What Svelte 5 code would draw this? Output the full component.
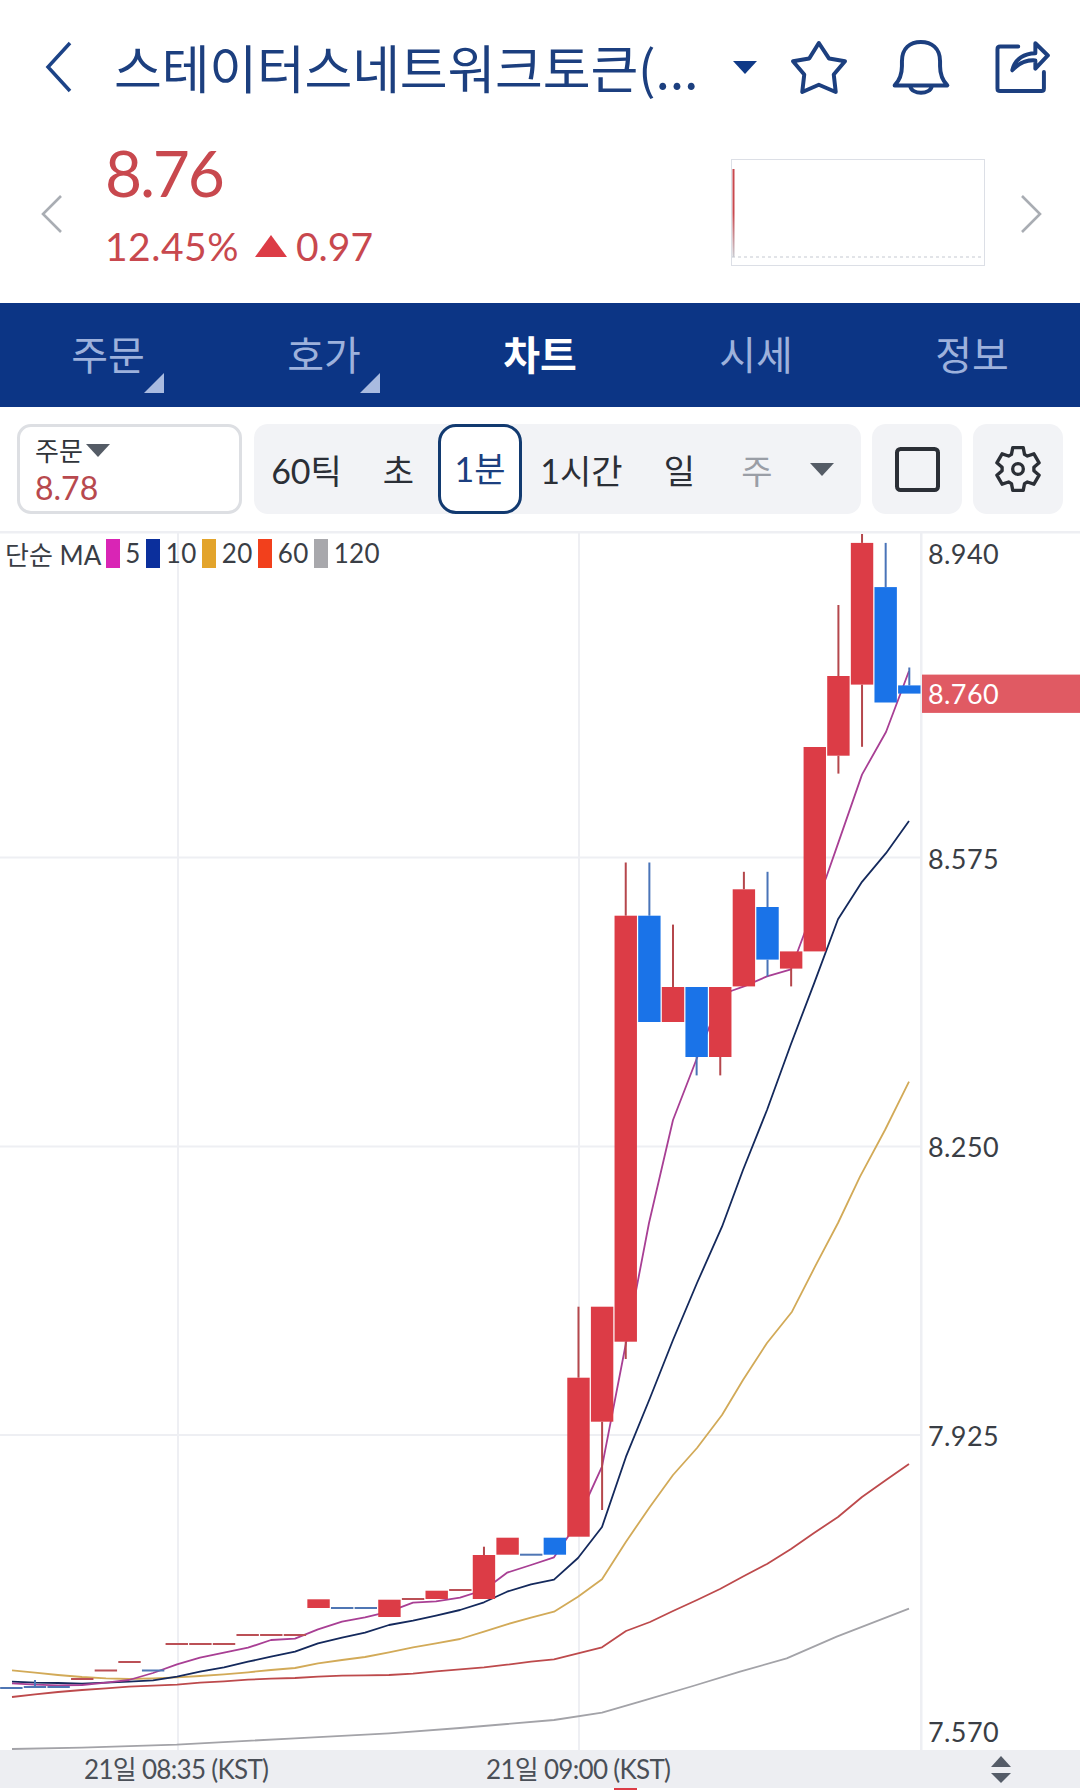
<script>
  const tabs = [
    { label: '주문', corner: true },
    { label: '호가', corner: true },
    { label: '차트', active: true },
    { label: '시세' },
    { label: '정보' }
  ];

  const xAt = (k) => 909.3 - 23.63 * k;

  // k, top, bottom, wick top, wick bottom, colour
  const candles = [
    [0, 685.4, 693.6, 667.5, 0, 'b'],
    [1, 587.1, 702.5, 542.9, 0, 'b'],
    [2, 542.9, 684.6, 534, 746.8, 'r'],
    [3, 676, 755.7, 605, 773.6, 'r'],
    [4, 747, 951.4, 0, 0, 'r'],
    [5, 951.4, 968.6, 0, 986.4, 'r'],
    [6, 907, 959.6, 871.8, 976.4, 'b'],
    [7, 889.3, 986.4, 871.8, 0, 'r'],
    [8, 987, 1057, 0, 1075.4, 'r'],
    [9, 987, 1057, 0, 1075.4, 'b'],
    [10, 987, 1022, 924.6, 0, 'r'],
    [11, 915.7, 1022, 862.5, 0, 'b'],
    [12, 915.7, 1341.7, 862.5, 1359, 'r'],
    [13, 1306.7, 1421.7, 0, 1510, 'r'],
    [14, 1377.7, 1536.7, 1306.7, 0, 'r'],
    [15, 1537.7, 1554.7, 0, 0, 'b'],
    [16, 1553.7, 1555.7, 0, 0, 'b'],
    [17, 1537.7, 1554.7, 0, 0, 'r'],
    [18, 1555, 1599, 1546.7, 0, 'r'],
    [19, 1589, 1591, 0, 0, 'r'],
    [20, 1590.7, 1599, 0, 0, 'r'],
    [21, 1598, 1600, 0, 0, 'r'],
    [22, 1599.7, 1617, 0, 0, 'r'],
    [23, 1607, 1609, 0, 0, 'b'],
    [24, 1607, 1609, 0, 0, 'b'],
    [25, 1599.3, 1608, 0, 0, 'r'],
    [26, 1634, 1636, 0, 0, 'r'],
    [27, 1634, 1636, 0, 0, 'r'],
    [28, 1634, 1636, 0, 0, 'r'],
    [29, 1643, 1645, 0, 0, 'r'],
    [30, 1643, 1645, 0, 0, 'r'],
    [31, 1643, 1645, 0, 0, 'r'],
    [32, 1669.5, 1671.5, 0, 0, 'b'],
    [33, 1661, 1663, 0, 0, 'r'],
    [34, 1669.5, 1671.5, 0, 0, 'r'],
    [35, 1678, 1680, 0, 0, 'r'],
    [36, 1686, 1688, 0, 0, 'b'],
    [37, 1686, 1688, 1680, 0, 'b'],
    [38, 1687, 1689, 0, 0, 'b']
  ];

  const ma = [
    {
      color: '#a3a3a8',
      pts: '12,1749 82,1747.7 176.7,1744.7 294.7,1738.3 389,1733.3 460,1728 554,1720 602,1712.7 640,1701.7 693,1686 740,1671.7 786.7,1658.3 836.7,1636.7 909,1608.7'
    },
    {
      color: '#bd4a4c',
      pts: '12,1697 35,1694.3 58,1692 82,1690 106,1688.3 129,1686.7 153,1685.7 177,1684.7 200,1682.7 224,1681.3 248,1679.7 271,1678.7 295,1678 318,1676.7 342,1675.7 365,1675.3 389,1675 413,1673.7 436,1671.3 460,1669.3 484,1667.3 507,1664.7 531,1661.7 554,1659.3 578,1653.3 602,1647.3 626,1631 650,1622 673,1611 697,1600 720,1589 744,1576 767,1564 791,1549 814,1533 838,1517 862,1497 886,1480 909,1464'
    },
    {
      color: '#d2aa58',
      pts: '12,1670.3 35,1672.7 58,1675 82,1677 106,1678.3 129,1679 153,1678.3 177,1677.3 200,1676 224,1674.3 248,1672.3 271,1670 295,1668 318,1663.3 342,1660 365,1657 389,1652.3 413,1647.3 436,1643.3 460,1639 484,1631.7 507,1624.3 531,1617.7 554,1611.7 578,1596.7 602,1579.3 626,1541.7 650,1506.7 673,1475 697,1448 722,1415 743,1380 767,1343 792,1311.7 815,1266.7 838,1223 860,1176.7 885,1130 909,1081.7'
    },
    {
      color: '#14295c',
      pts: '12,1681.7 35,1682.7 58,1683 82,1683.7 106,1682.7 129,1681.7 153,1680.3 177,1676.7 200,1671.7 224,1667.3 248,1661.7 271,1656.7 295,1651.7 318,1643.3 342,1637.7 365,1632.7 389,1625 413,1620.7 436,1615.7 460,1610 484,1602.3 507,1591.7 531,1584.3 554,1579.7 578,1558 602,1527 626,1456.7 650,1398 673,1340 697,1283 722,1226.7 743,1170 767,1110 791,1044 814,983.6 838,919.3 862,881.8 886,853.2 909,821'
    },
    {
      color: '#a83f94',
      pts: '12,1683.3 35,1684.7 58,1685.3 82,1685 106,1682.7 129,1680 153,1673 177,1664.3 200,1657.7 224,1652.7 248,1647.7 271,1640 295,1638.7 318,1629.3 342,1621.7 365,1617.3 389,1611.7 413,1602.7 436,1601.3 460,1597.7 484,1590 507,1572.7 531,1565 554,1557.3 578,1522 589,1495 602,1466.7 626,1343 649,1223 673,1120 697,1058 720,1000 731,991 744,986.4 767,976.4 791,969.3 803,937 814,908 826,878 838,843.6 862,774.6 886,732 909,671'
    }
  ];

  const hlines = [857.5, 1146.5, 1435];
  const vlines = [178, 579];
  const prices = [
    ['8.940', 553.6],
    ['8.575', 858.6],
    ['8.250', 1146.5],
    ['7.925', 1435],
    ['7.570', 1731.7]
  ];

  const legend = [
    { color: '#d925b5', text: '5' },
    { color: '#0b2f9c', text: '10' },
    { color: '#e3a42b', text: '20' },
    { color: '#f2401c', text: '60' },
    { color: '#a8a8ac', text: '120' }
  ];

  // gear outline, six teeth around (0,0)
  const gear = [];
  for (let i = 0; i < 6; i++) {
    const a = (i * Math.PI) / 3 - Math.PI / 2;
    for (const [r, d] of [[48, -0.42], [66, -0.24], [66, 0.24], [48, 0.42]]) {
      gear.push(`${(r * Math.cos(a + d)).toFixed(1)},${(r * Math.sin(a + d)).toFixed(1)}`);
    }
  }
</script>

<div class="page">
  <header class="top">
    <svg class="back" viewBox="0 0 27 52"><path d="M25 2 L3 26 L25 50" /></svg>
    <div class="title">스테이터스네트워크토큰(...</div>
    <span class="drop"></span>
    <svg class="star" viewBox="55 35 185 178">
      <polygon points="147,50 178,97 226,105 192,145 198,198 147,176 97,198 103,145 69,105 118,97" />
    </svg>
    <svg class="bell" viewBox="360 35 185 178">
      <path d="M373 178 Q395 155 395 120 V105 C395 65 420 47 452 47 S510 65 510 105 V120 Q510 155 532 178 Z" />
      <path d="M420 180 C425 207 480 207 485 180" />
    </svg>
    <svg class="share" viewBox="672 35 175 170">
      <path d="M745 58 H690 Q682 58 682 66 V185 Q682 193 690 193 H815 Q823 193 823 185 V135" />
      <path d="M727 130 C735 95 765 78 797 78 V48 L835 85 L797 125 V100 C770 98 745 110 727 130 Z" />
    </svg>
  </header>

  <section class="quote">
    <svg class="nav" viewBox="0 0 21 38"><path d="M20 1 L2 19 L20 37" /></svg>
    <div class="price">
      <div class="now">8.76</div>
      <div class="change">
        <span class="pct">12.45%</span>
        <i class="up"></i>
        <span>0.97</span>
      </div>
    </div>
    <div class="spark">
      <svg viewBox="0 0 252 105">
        <defs>
          <linearGradient id="sparkline" x1="0" y1="0" x2="0" y2="1">
            <stop offset="0" stop-color="#c8484e" />
            <stop offset="0.5" stop-color="#c8484e" />
            <stop offset="1" stop-color="#c9ccd2" />
          </linearGradient>
        </defs>
        <line class="dots" x1="0" y1="97" x2="252" y2="97" />
        <rect x="0.5" y="9" width="2" height="88" fill="url(#sparkline)" />
      </svg>
    </div>
    <svg class="nav next" viewBox="0 0 21 38"><path d="M1 1 L19 19 L1 37" /></svg>
  </section>

  <nav class="tabs">
    {#each tabs as tab}
      <div class="tab" class:active={tab.active}>
        {tab.label}
        {#if tab.corner}<span class="corner"></span>{/if}
      </div>
    {/each}
  </nav>

  <section class="toolbar">
    <div class="order">
      <div class="order-label">주문<i></i></div>
      <div class="order-price">8.78</div>
    </div>
    <div class="periods">
      <span>60틱</span>
      <span>초</span>
      <span class="on">1분</span>
      <span>1시간</span>
      <span>일</span>
      <span class="off">주</span>
      <i></i>
    </div>
    <div class="tool">
      <svg viewBox="0 0 45 45" width="45" height="45"><rect x="2" y="2" width="41" height="41" rx="3.5" /></svg>
    </div>
    <div class="tool">
      <svg viewBox="-75 -75 150 150" width="50" height="50">
        <polygon points={gear.join(' ')} />
        <circle r="16" />
      </svg>
    </div>
  </section>

  <section class="chart">
    <svg viewBox="0 531 1080 1219" width="1080" height="1219">
      <rect class="grid" x="0" y="531" width="1080" height="2.5" />
      {#each vlines as x}<rect class="grid" x={x - 1} y="533" width="2" height="1217" />{/each}
      {#each hlines as y}<rect class="grid" x="0" y={y - 1} width="921" height="2" />{/each}
      <rect class="grid" x="920" y="533" width="2.5" height="1217" />

      {#each ma as line}
        <polyline points={line.pts} fill="none" stroke={line.color} stroke-width="1.8" stroke-linejoin="round" />
      {/each}

      {#each candles as [k, top, bot, wt, wb, c]}
        {#if wt}<rect x={xAt(k) - 1} y={wt} width="2" height={top - wt} fill={c === 'r' ? '#b5474c' : '#4a74b8'} />{/if}
        {#if wb}<rect x={xAt(k) - 1} y={bot} width="2" height={wb - bot} fill={c === 'r' ? '#b5474c' : '#4a74b8'} />{/if}
        {#if bot - top < 3}
          <rect x={xAt(k) - 11.2} y={top} width="22.4" height={bot - top} fill={c === 'r' ? '#bb5056' : '#4f76b4'} />
        {:else}
          <rect x={xAt(k) - 11.2} y={top} width="22.4" height={bot - top} fill={c === 'r' ? '#dc3c46' : '#1a73e8'} />
        {/if}
      {/each}

      <rect x="922" y="674.6" width="158" height="38.3" fill="#e05a63" />
      {#each prices as [label, y]}
        <text x="928" y={y} class="axis">{label}</text>
      {/each}
      <text x="928" y="693.6" class="axis cur">8.760</text>
    </svg>

    <div class="legend">
      <span class="ma-name">단순 MA</span>
      {#each legend as item}
        <i style="background:{item.color}"></i><span>{item.text}</span>
      {/each}
    </div>
  </section>

  <footer class="times">
    <span class="time first">21일 08:35 (KST)</span>
    <span class="time second">21일 09:00 (KST)</span>
    <svg class="updown" viewBox="0 0 20 27" width="20" height="27">
      <polygon points="10,0 20,11 0,11" />
      <polygon points="0,17 20,17 10,27" />
    </svg>
    <span class="peek"></span>
  </footer>
</div>

<style>
  :global(body) {
    margin: 0;
    background: #fff;
  }

  .page {
    width: 1080px;
    height: 1790px;
    overflow: hidden;
    font-family: Lato, "Noto Sans CJK KR", sans-serif;
    color: #30343a;
  }

  .top {
    display: flex;
    align-items: center;
    box-sizing: border-box;
    height: 130px;
    padding: 4px 0 0 45px;
  }

  .back {
    width: 27px;
    height: 52px;
    margin-right: 42px;
  }

  .back path {
    fill: none;
    stroke: #1c4387;
    stroke-width: 3.5;
  }

  .title {
    width: 619px;
    font-size: 52px;
    letter-spacing: -0.2px;
    line-height: 60px;
    font-weight: 400;
    color: #1c3f7f;
    white-space: nowrap;
    font-family: "Noto Sans CJK KR", sans-serif;
  }

  .drop {
    width: 0;
    height: 0;
    border-left: 12px solid transparent;
    border-right: 12px solid transparent;
    border-top: 13px solid #0f3a88;
  }

  .star,
  .bell,
  .share {
    width: 62px;
    height: 59px;
    fill: none;
    stroke: #1c3f7f;
    stroke-width: 12;
    stroke-linejoin: round;
    stroke-linecap: round;
  }

  .star { margin-left: 31px; }
  .bell { margin-left: 40px; }
  .share { margin-left: 42px; width: 58px; height: 56px; }

  .quote {
    display: flex;
    align-items: flex-start;
    box-sizing: border-box;
    height: 173px;
    padding: 0 38px 0 41px;
  }

  .nav {
    width: 21px;
    height: 38px;
    margin: 65px 43px 0 0;
  }

  .nav path {
    fill: none;
    stroke: #a9adb3;
    stroke-width: 2.6;
  }

  .nav.next {
    margin: 65px 0 0 36px;
  }

  .price {
    margin-top: 6px;
    color: #c8484e;
  }

  .now {
    font-size: 64px;
    letter-spacing: -2.2px;
    line-height: 74px;
  }

  .change {
    display: flex;
    align-items: center;
    margin-top: 13px;
    font-size: 39px;
    line-height: 46px;
  }

  .pct {
    letter-spacing: 0.5px;
  }

  .up {
    width: 0;
    height: 0;
    margin: 0 9px 0 16px;
    border-left: 16px solid transparent;
    border-right: 16px solid transparent;
    border-bottom: 22px solid #dc3c46;
  }

  .spark {
    box-sizing: border-box;
    width: 254px;
    height: 107px;
    margin: 29px 0 0 auto;
    border: 1px solid #dcdfe6;
  }

  .spark svg {
    display: block;
    width: 252px;
    height: 105px;
  }

  .dots {
    stroke: #e2e4e8;
    stroke-width: 2;
    stroke-dasharray: 3 3;
  }

  .tabs {
    display: grid;
    grid-template-columns: repeat(5, 1fr);
    height: 104px;
    background: #0c3585;
  }

  .tab {
    position: relative;
    text-align: center;
    font-size: 40px;
    line-height: 100px;
    color: #9db1dc;
    font-family: "Noto Sans CJK KR", sans-serif;
  }

  .tab.active {
    color: #fff;
    font-weight: 700;
  }

  .corner {
    position: absolute;
    left: 144px;
    top: 70px;
    width: 0;
    height: 0;
    border-left: 20px solid transparent;
    border-bottom: 20px solid #a9bbe0;
  }

  .toolbar {
    display: flex;
    gap: 11px;
    box-sizing: border-box;
    height: 124px;
    padding: 17px 0 0 17px;
  }

  .order {
    box-sizing: border-box;
    width: 225px;
    height: 90px;
    margin-right: 1px;
    padding: 6px 0 0 15px;
    border: 3px solid #dddfe3;
    border-radius: 14px;
  }

  .order-label {
    display: flex;
    align-items: center;
    font-size: 26px;
    line-height: 34px;
    font-family: "Noto Sans CJK KR", sans-serif;
  }

  .order-label i {
    width: 0;
    height: 0;
    margin-left: 3px;
    border-left: 12px solid transparent;
    border-right: 12px solid transparent;
    border-top: 13px solid #555c66;
  }

  .order-price {
    font-size: 32px;
    line-height: 42px;
    color: #b8494e;
  }

  .periods {
    display: grid;
    grid-template-columns: 105px 79px 84px 119px 77px 78px 52px;
    align-items: center;
    box-sizing: border-box;
    width: 607px;
    height: 90px;
    background: #f2f3f6;
    border-radius: 14px;
    font-size: 34px;
    text-align: center;
    font-family: Lato, "Noto Sans CJK KR", sans-serif;
    color: #2b2f36;
  }

  .periods span.on {
    box-sizing: border-box;
    height: 90px;
    line-height: 84px;
    background: #fff;
    border: 3px solid #123a70;
    border-radius: 18px;
    color: #1c3f7f;
  }

  .periods span.off {
    color: #9a9ea6;
  }

  .periods i {
    justify-self: center;
    width: 0;
    height: 0;
    border-left: 12px solid transparent;
    border-right: 12px solid transparent;
    border-top: 13px solid #555c66;
  }

  .tool {
    display: flex;
    align-items: center;
    justify-content: center;
    width: 90px;
    height: 90px;
    background: #f2f3f6;
    border-radius: 14px;
  }

  .tool svg {
    fill: none;
    stroke: #2b2f36;
    stroke-linejoin: round;
  }

  .tool rect {
    stroke-width: 4;
  }

  .tool polygon,
  .tool circle {
    stroke-width: 10;
  }

  .chart {
    position: relative;
    height: 1219px;
  }

  .chart svg {
    display: block;
  }

  .grid {
    fill: #eeeff3;
  }

  .axis {
    font-size: 27px;
    letter-spacing: 0.4px;
    fill: #3a3e45;
    dominant-baseline: central;
  }

  .axis.cur {
    fill: #fff;
  }

  .legend {
    position: absolute;
    left: 5px;
    top: 7px;
    display: flex;
    align-items: center;
    height: 30px;
    font-size: 26px;
    letter-spacing: 0.4px;
    font-family: Lato, "Noto Sans CJK KR", sans-serif;
    color: #3a3e45;
  }

  .legend i {
    width: 14px;
    height: 29px;
    margin: 0 5.5px;
  }

  .legend .ma-name {
    margin-right: -1px;
    letter-spacing: 0;
  }

  .times {
    position: relative;
    height: 38px;
    background: #edeef2;
    font-size: 26px;
    letter-spacing: -0.7px;
    line-height: 38px;
    color: #4a4f57;
  }

  .time {
    position: absolute;
    top: 0;
    white-space: nowrap;
  }

  .first { left: 84px; }
  .second { left: 486px; }

  .updown {
    position: absolute;
    left: 991px;
    top: 6px;
    fill: #555c68;
  }

  .peek {
    position: absolute;
    left: 614px;
    top: 38px;
    width: 23px;
    height: 2px;
    background: #dc3c46;
  }
</style>
